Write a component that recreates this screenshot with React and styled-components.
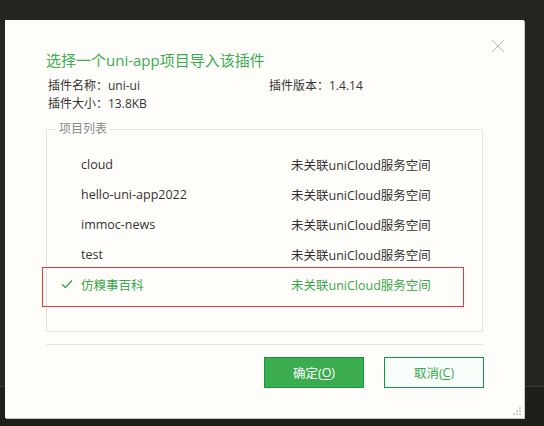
import React from 'react'
import styled, { createGlobalStyle } from 'styled-components'

const GlobalStyle = createGlobalStyle`
  html, body {
    margin: 0;
    padding: 0;
    background: #262621;
  }
  body {
    font-family: "Open Sans", "Noto Sans CJK SC", sans-serif;
  }
`

const projects = [
  { name: 'cloud', status: '未关联uniCloud服务空间' },
  { name: 'hello-uni-app2022', status: '未关联uniCloud服务空间' },
  { name: 'immoc-news', status: '未关联uniCloud服务空间' },
  { name: 'test', status: '未关联uniCloud服务空间' },
  { name: '仿糗事百科', status: '未关联uniCloud服务空间', selected: true },
]

const App = () => {
  return (
    <>
      <GlobalStyle />
      <Page>
        <Dialog>
          <CloseButton aria-label='关闭'>
            <svg width='14' height='14' viewBox='0 0 14 14'>
              <path d='M1 1L13 13M13 1L1 13' stroke='#bdbdbd' strokeWidth='1' fill='none' />
            </svg>
          </CloseButton>

          <Title>选择一个uni-app项目导入该插件</Title>

          <Info>
            <span>插件名称：uni-ui</span>
            <span>插件版本：1.4.14</span>
            <span>插件大小：13.8KB</span>
          </Info>

          <ProjectSet>
            <Legend>项目列表</Legend>
            {projects.map(p => (
              <Row key={p.name} selected={p.selected}>
                <Check>
                  {p.selected && (
                    <svg width='12' height='10' viewBox='0 0 12 10'>
                      <path d='M1 5.2L4.3 8.4L11 1.4' stroke='#3aa54e' strokeWidth='1.4' fill='none' />
                    </svg>
                  )}
                </Check>
                <span>{p.name}</span>
                <span>{p.status}</span>
              </Row>
            ))}
          </ProjectSet>

          <Divider />

          <Footer>
            <Button primary>确定(<u>O</u>)</Button>
            <Button>取消(<u>C</u>)</Button>
          </Footer>

          <Highlight />

          <Grip>
            <svg width='9' height='9' viewBox='0 0 9 9'>
              <rect x='6' y='0' width='2' height='2' fill='#cfcfcf' />
              <rect x='3' y='3' width='2' height='2' fill='#cfcfcf' />
              <rect x='6' y='3' width='2' height='2' fill='#cfcfcf' />
              <rect x='0' y='6' width='2' height='2' fill='#cfcfcf' />
              <rect x='3' y='6' width='2' height='2' fill='#cfcfcf' />
              <rect x='6' y='6' width='2' height='2' fill='#cfcfcf' />
            </svg>
          </Grip>
        </Dialog>
      </Page>
    </>
  )
}

export default App

const Page = styled.div`
  width: 544px;
  height: 426px;
  box-sizing: border-box;
  padding: 20px 0 0 5px;
  background: linear-gradient(to bottom, #262621 0, #262621 386px, #3a3a36 386px, #3a3a36 387px, #1e1f1a 387px);
`

const Dialog = styled.div`
  position: relative;
  width: 519px;
  height: 398px;
  box-sizing: border-box;
  padding: 30px 41px 0 41px;
  background: #fffdf9;
  box-shadow: 1px 1px 0 #c9c9c6;
`

const CloseButton = styled.div`
  position: absolute;
  top: 19px;
  left: 486px;
  width: 14px;
  height: 14px;
  line-height: 0;
`

const Title = styled.div`
  font-size: 15px;
  line-height: 20px;
  color: #3aab4f;
`

const Info = styled.div`
  display: grid;
  grid-template-columns: 221px 1fr;
  margin-top: 7px;
  padding-left: 2px;
  font-size: 12px;
  line-height: 18px;
  color: #333;
`

const ProjectSet = styled.fieldset`
  margin: 7px 0 0 0;
  padding: 11px 0 32px 0;
  border: 1px solid #e3e3e3;
  min-width: 0;
`

const Legend = styled.legend`
  margin-left: 9px;
  padding: 0 3px;
  font-size: 12px;
  line-height: 18px;
  color: #8a8a8a;
`

const Row = styled.div`
  display: grid;
  grid-template-columns: 20px 210px 1fr;
  align-items: center;
  height: 30px;
  padding-left: 14px;
  font-size: 12.5px;
  color: ${p => (p.selected ? '#3aa54e' : '#333')};
`

const Check = styled.div`
  display: flex;
  align-items: center;
  height: 30px;
`

const Divider = styled.div`
  height: 1px;
  margin-top: 12px;
  background: #e2e2e2;
`

const Footer = styled.div`
  display: flex;
  justify-content: flex-end;
  gap: 20px;
  margin-top: 12px;
  margin-right: -1px;
`

const Button = styled.div`
  display: flex;
  align-items: center;
  justify-content: center;
  width: 100px;
  height: 31px;
  box-sizing: border-box;
  font-size: 12.5px;
  border: 1.5px solid #0b9a43;
  background: ${p => (p.primary ? '#3bad4f' : '#f8fffa')};
  color: ${p => (p.primary ? '#fff' : '#3aa54e')};

  u {
    text-underline-offset: 2px;
  }
`

const Highlight = styled.div`
  position: absolute;
  left: 37px;
  top: 247px;
  width: 422px;
  height: 40px;
  box-sizing: border-box;
  border: 1.5px solid #e4383e;
  pointer-events: none;
`

const Grip = styled.div`
  position: absolute;
  right: 2px;
  bottom: 2px;
  line-height: 0;
`
